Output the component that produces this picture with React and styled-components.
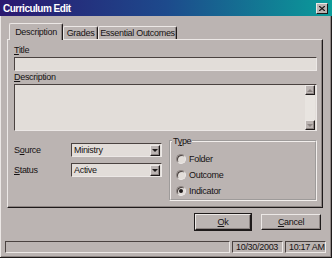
import React from "react";
import styled, { createGlobalStyle } from "styled-components";

const face = "#bbb4b2";
const light = "#ece8e6";
const shadow = "#8c8482";
const dark = "#1e1a1a";
const field = "#e2ddd9";

const GlobalStyle = createGlobalStyle`
  html, body {
    margin: 0;
    padding: 0;
    background: ${face};
  }
  body {
    font-family: "Liberation Sans", Arial, sans-serif;
    font-size: 9px;
    letter-spacing: -0.3px;
    color: #161212;
  }
`;

const Window = styled.div`
  width: 332px;
  height: 258px;
  box-sizing: border-box;
  display: flex;
  flex-direction: column;
  background: ${face};
  box-shadow: inset -1px -1px ${dark}, inset 1px 0 ${light},
    inset -2px -2px ${shadow};
  overflow: hidden;
  white-space: nowrap;
`;

const TitleBar = styled.div`
  height: 16px;
  flex: none;
  display: flex;
  align-items: center;
  justify-content: space-between;
  padding: 0 4px 0 3px;
  background: linear-gradient(90deg, #2a1870 0%, #1d4a8c 50%, #0a9c9a 100%);
  color: #fff;
  font-weight: bold;
  font-size: 10px;
  letter-spacing: -0.5px;
`;

const CloseButton = styled.div`
  width: 12px;
  height: 11px;
  box-sizing: border-box;
  display: flex;
  align-items: center;
  justify-content: center;
  background: ${face};
  border-top: 1px solid ${light};
  border-left: 1px solid ${light};
  border-right: 1px solid ${dark};
  border-bottom: 1px solid ${dark};
`;

const Main = styled.div`
  display: flex;
  flex-direction: column;
  padding: 7px 9px 0 7px;
`;

const TabStrip = styled.div`
  display: flex;
  align-items: flex-end;
  height: 16px;
  padding-left: 2px;
  position: relative;
  z-index: 1;
`;

const Tab = styled.div`
  width: ${(p) => p.$w}px;
  height: ${(p) => (p.$active ? 17 : 13)}px;
  margin-bottom: ${(p) => (p.$active ? -1 : 0)}px;
  box-sizing: border-box;
  display: flex;
  justify-content: center;
  padding-top: ${(p) => (p.$active ? 3 : 1)}px;
  background: ${face};
  border-top: 1px solid ${light};
  border-left: 1px solid ${light};
  border-right: 1px solid ${dark};
  border-radius: 2px 2px 0 0;
  box-shadow: inset -1px 0 ${shadow};
`;

const Panel = styled.div`
  height: 169px;
  box-sizing: border-box;
  display: flex;
  flex-direction: column;
  padding: 4px 5px 0 6px;
  border-top: 1px solid ${light};
  border-left: 1px solid ${light};
  border-right: 1px solid ${dark};
  border-bottom: 1px solid ${dark};
  box-shadow: inset -1px -1px ${shadow};
`;

const Label = styled.div`
  height: 12px;
  line-height: 12px;
  width: ${(p) => (p.$w ? `${p.$w}px` : "auto")};
  flex: none;
`;

const Key = styled.span`
  text-decoration: underline;
`;

const Sunken = styled.div`
  box-sizing: border-box;
  background: ${field};
  border-top: 1px solid #4a4240;
  border-left: 1px solid #4a4240;
  border-right: 1px solid ${light};
  border-bottom: 1px solid ${light};
`;

const TextInput = styled(Sunken)`
  height: 14px;
  margin-top: 1px;
`;

const TextArea = styled(Sunken)`
  height: 47px;
  margin-top: 1px;
  display: flex;
  justify-content: flex-end;
  padding: 0 1px 0 0;
`;

const ScrollBar = styled.div`
  width: 10px;
  display: flex;
  flex-direction: column;
  justify-content: space-between;
  background: #e8e4e0;
`;

const ArrowButton = styled.div`
  width: ${(p) => p.$w || 10}px;
  height: ${(p) => p.$h || 10}px;
  box-sizing: border-box;
  display: flex;
  align-items: center;
  justify-content: center;
  background: ${face};
  border-top: 1px solid ${light};
  border-left: 1px solid ${light};
  border-right: 1px solid ${dark};
  border-bottom: 1px solid ${dark};
  box-shadow: inset -1px -1px ${shadow};
  flex: none;
`;

const Triangle = styled.div`
  width: 0;
  height: 0;
  border-left: 3px solid transparent;
  border-right: 3px solid transparent;
  ${(p) =>
    p.$up
      ? `border-bottom: 3px solid ${p.$c || dark};`
      : `border-top: 3px solid ${p.$c || dark};`}
`;

const Lower = styled.div`
  display: flex;
  margin-top: 5px;
  justify-content: space-between;
`;

const Fields = styled.div`
  display: flex;
  flex-direction: column;
  gap: 6px;
  padding-top: 7px;
`;

const FieldRow = styled.div`
  display: flex;
  align-items: center;
  height: 14px;
`;

const Select = styled(Sunken)`
  width: 91px;
  height: 14px;
  display: flex;
  align-items: center;
  justify-content: space-between;
  padding: 0 1px 0 2px;
`;

const GroupBox = styled.fieldset`
  width: 148px;
  height: 65px;
  box-sizing: border-box;
  margin: 0;
  padding: 0 5px;
  border: 2px groove #f2eeec;
  display: flex;
  flex-direction: column;
  min-width: 0;
`;

const Legend = styled.legend`
  padding: 0 1px;
  margin-left: -4px;
  line-height: 10px;
  height: 10px;
`;

const Options = styled.div`
  display: flex;
  flex-direction: column;
  margin-top: 5px;
`;

const Option = styled.div`
  display: flex;
  align-items: center;
  gap: 3px;
  height: 16px;
`;

const Radio = styled.span`
  width: 10px;
  height: 10px;
  box-sizing: border-box;
  border-radius: 50%;
  border-top: 1px solid ${shadow};
  border-left: 1px solid ${shadow};
  border-right: 1px solid ${light};
  border-bottom: 1px solid ${light};
  background: ${field};
  box-shadow: inset 1px 1px #4a4240;
  display: flex;
  align-items: center;
  justify-content: center;
  &::after {
    content: "";
    width: 4px;
    height: 4px;
    border-radius: 50%;
    background: ${(p) => (p.$checked ? dark : "transparent")};
  }
`;

const ButtonRow = styled.div`
  display: flex;
  justify-content: flex-end;
  gap: 10px;
  margin-top: 6px;
  padding-right: 2px;
`;

const Button = styled.div`
  width: ${(p) => p.$w}px;
  height: 16px;
  box-sizing: border-box;
  display: flex;
  align-items: center;
  justify-content: center;
  background: ${face};
  border-top: 1px solid ${light};
  border-left: 1px solid ${light};
  border-right: 1px solid ${dark};
  border-bottom: 1px solid ${dark};
  box-shadow: inset -1px -1px ${shadow}
    ${(p) => (p.$default ? `, 0 0 0 1px ${dark}` : "")};
`;

const StatusBar = styled.div`
  display: flex;
  gap: 2px;
  height: 12px;
  margin-top: 11px;
  padding: 0 6px 0 5px;
`;

const StatusPanel = styled.div`
  box-sizing: border-box;
  height: 12px;
  line-height: 10px;
  padding-left: 3px;
  width: ${(p) => (p.$w ? `${p.$w}px` : "auto")};
  flex: ${(p) => (p.$w ? "none" : "1")};
  border-top: 1px solid #4a4240;
  border-left: 1px solid #4a4240;
  border-right: 1px solid ${light};
  border-bottom: 1px solid ${light};
  overflow: hidden;
`;

const tabs = [
  { label: "Description", w: 54, active: true },
  { label: "Grades", w: 35 },
  { label: "Essential Outcomes", w: 79 },
];

const types = [
  { label: "Folder" },
  { label: "Outcome" },
  { label: "Indicator", checked: true },
];

function Dropdown({ value }) {
  return (
    <Select>
      <span>{value}</span>
      <ArrowButton $w={10} $h={11}>
        <Triangle />
      </ArrowButton>
    </Select>
  );
}

export default function App() {
  return (
    <>
      <GlobalStyle />
      <Window>
        <TitleBar>
          <span>Curriculum Edit</span>
          <CloseButton>
            <svg width="6" height="5" viewBox="0 0 6 5">
              <path d="M0 0L6 5M6 0L0 5" stroke="#1e1a1a" strokeWidth="1.3" />
            </svg>
          </CloseButton>
        </TitleBar>
        <Main>
          <TabStrip>
            {tabs.map((t) => (
              <Tab key={t.label} $w={t.w} $active={t.active}>
                {t.label}
              </Tab>
            ))}
          </TabStrip>
          <Panel>
            <Label>
              <Key>T</Key>itle
            </Label>
            <TextInput />
            <Label>
              <Key>D</Key>escription
            </Label>
            <TextArea>
              <ScrollBar>
                <ArrowButton>
                  <Triangle $up $c={shadow} />
                </ArrowButton>
                <ArrowButton>
                  <Triangle $c={shadow} />
                </ArrowButton>
              </ScrollBar>
            </TextArea>
            <Lower>
              <Fields>
                <FieldRow>
                  <Label $w={57}>
                    S<Key>o</Key>urce
                  </Label>
                  <Dropdown value="Ministry" />
                </FieldRow>
                <FieldRow>
                  <Label $w={57}>
                    <Key>S</Key>tatus
                  </Label>
                  <Dropdown value="Active" />
                </FieldRow>
              </Fields>
              <GroupBox>
                <Legend>
                  T<Key>y</Key>pe
                </Legend>
                <Options>
                  {types.map((o) => (
                    <Option key={o.label}>
                      <Radio $checked={o.checked} />
                      <span>{o.label}</span>
                    </Option>
                  ))}
                </Options>
              </GroupBox>
            </Lower>
          </Panel>
          <ButtonRow>
            <Button $w={56} $default>
              <span>
                <Key>O</Key>k
              </span>
            </Button>
            <Button $w={60}>
              <span>
                <Key>C</Key>ancel
              </span>
            </Button>
          </ButtonRow>
        </Main>
        <StatusBar>
          <StatusPanel />
          <StatusPanel $w={51}>10/30/2003</StatusPanel>
          <StatusPanel $w={41}>10:17 AM</StatusPanel>
        </StatusBar>
      </Window>
    </>
  );
}
